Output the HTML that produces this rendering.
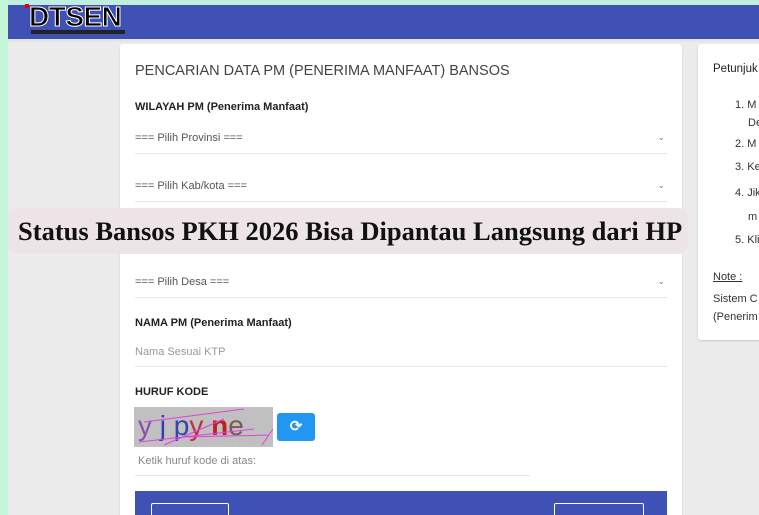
<!DOCTYPE html>
<html><head><meta charset="utf-8"><style>
*{margin:0;padding:0;box-sizing:border-box}
html,body{width:759px;height:515px;overflow:hidden}
body{background:#ececec;font-family:"Liberation Sans",sans-serif;position:relative;color:#333}
.abs{position:absolute;white-space:nowrap}
.sel{position:absolute;left:135px;width:532px;font-size:11px;color:#555;border-bottom:1px solid #e6e6e6;height:22px}
.sel span.c{position:absolute;right:2px;top:0;font-size:9px;color:#777}
.lbl{position:absolute;left:135px;font-size:11px;font-weight:bold;color:#222}
</style></head><body>
<div class="abs" style="left:0;top:0;width:759px;height:5px;background:#bfeee0"></div>
<div class="abs" style="left:0;top:0;width:8px;height:515px;background:#c6f6d8"></div>
<div class="abs" style="left:8px;top:5px;width:751px;height:34px;background:#3f51b5"></div>
<div class="abs" style="left:25px;top:4px;width:4px;height:4px;background:#e00"></div>
<div class="abs" style="left:29px;top:3px;font-size:28px;font-weight:bold;color:#000;letter-spacing:-0.5px;-webkit-text-stroke:1px #fff;line-height:28px">DTSEN</div>
<div class="abs" style="left:31px;top:30px;width:94px;height:4px;background:#222"></div>
<div class="abs" style="left:8px;top:39px;width:751px;height:3px;background:#e4e4e4"></div>

<div class="abs" style="left:120px;top:44px;width:562px;height:480px;background:#fff;border-radius:3px;box-shadow:0 1px 2px rgba(0,0,0,.12)"></div>
<div class="abs" style="left:135px;top:63px;font-size:14.5px;color:#444">PENCARIAN DATA PM (PENERIMA MANFAAT) BANSOS</div>
<div class="lbl" style="top:101px">WILAYAH PM (Penerima Manfaat)</div>
<div class="sel" style="top:132px">=== Pilih Provinsi ===<span class="c">⌄</span></div>
<div class="sel" style="top:180px">=== Pilih Kab/kota ===<span class="c">⌄</span></div>
<div class="sel" style="top:276px">=== Pilih Desa ===<span class="c">⌄</span></div>
<div class="lbl" style="top:317px">NAMA PM (Penerima Manfaat)</div>
<div class="sel" style="top:346px;color:#999;height:21px">Nama Sesuai KTP</div>
<div class="lbl" style="top:386px">HURUF KODE</div>
<div class="abs" style="left:134px;top:407px;width:139px;height:40px;background:#c0c0c0;overflow:hidden;font-size:28px;line-height:38px;font-family:'Liberation Sans',sans-serif">
<span style="color:#8a4fb0;margin-left:4px">y</span> <span style="color:#3a3ab0">j</span> <span style="color:#3344aa">p</span><span style="color:#c03040">y</span> <span style="color:#c02020;font-weight:bold">n</span><span style="color:#7a5a50">e</span>
<svg class="abs" style="left:0;top:0" width="139" height="40"><path d="M5 35 L120 22 M10 15 L110 2 M30 38 L90 12 M50 30 L135 28 M128 38 L139 22" stroke="#e040e0" stroke-width="1" fill="none"/></svg></div>
<div class="abs" style="left:277px;top:413px;width:38px;height:28px;background:#2196f3;border-radius:3px;color:#fff;font-size:15px;text-align:center;line-height:28px;font-weight:bold">⟳</div>
<div class="abs" style="left:135px;top:455px;width:395px;height:21px;border-bottom:1px solid #e6e6e6;font-size:11px;color:#888;padding-left:3px">Ketik huruf kode di atas:</div>
<div class="abs" style="left:135px;top:491px;width:532px;height:30px;background:#3f51b5"></div>
<div class="abs" style="left:151px;top:503px;width:78px;height:20px;border:1px solid #fff;border-radius:2px"></div>
<div class="abs" style="left:554px;top:503px;width:90px;height:20px;border:1px solid #fff;border-radius:2px"></div>

<div class="abs" style="left:698px;top:44px;width:70px;height:296px;background:#fff;border-radius:3px;box-shadow:0 1px 2px rgba(0,0,0,.15)"></div>
<div class="abs" style="left:713px;top:62px;font-size:11.5px;color:#222;line-height:14px">Petunjuk</div>
<div class="abs" style="left:735px;top:96px;font-size:11px;color:#333;line-height:18px">1. M<br><span style="margin-left:13px">De</span></div>
<div class="abs" style="left:735px;top:138px;font-size:11px;color:#333">2. M</div>
<div class="abs" style="left:735px;top:161px;font-size:11px;color:#333">3. Ke</div>
<div class="abs" style="left:735px;top:187px;font-size:11px;color:#333">4. Jik</div>
<div class="abs" style="left:748px;top:211px;font-size:11px;color:#333">m</div>
<div class="abs" style="left:735px;top:234px;font-size:11px;color:#333">5. Kli</div>
<div class="abs" style="left:713px;top:271px;font-size:11px;color:#333;text-decoration:underline">Note :</div>
<div class="abs" style="left:713px;top:290px;font-size:11px;color:#333;line-height:18px">Sistem C<br>(Penerim</div>

<div class="abs" style="left:8px;top:208px;width:680px;height:46px;background:#ede4e7;border-radius:10px"></div>
<div class="abs" style="left:18px;top:215px;font-family:'Liberation Serif','DejaVu Serif',serif;font-size:26.5px;font-weight:bold;color:#111;line-height:32px">Status Bansos PKH 2026 Bisa Dipantau Langsung dari HP</div>
</body></html>
